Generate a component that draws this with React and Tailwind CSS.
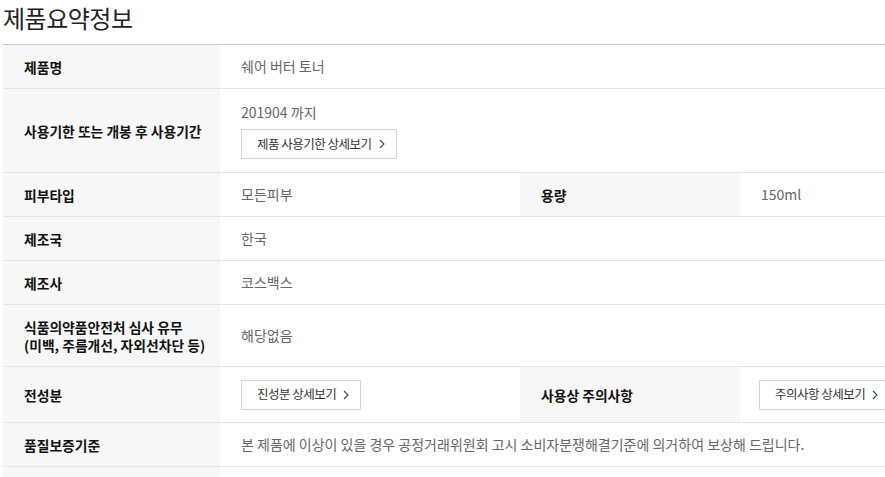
const Chevron = () => (
  <svg width="6" height="10" viewBox="0 0 6 10" className="ml-[7px] shrink-0">
    <polyline points="1,1 5,5 1,9" fill="none" stroke="#444" strokeWidth="1.1" />
  </svg>
);

function DetailButton({ children }) {
  return (
    <button className="h-[30px] flex items-center border border-[#d6d6d6] bg-white pl-[15px] pr-[11px] text-[12.5px] text-[#333] tracking-[-0.5px] whitespace-nowrap">
      {children}
      <Chevron />
    </button>
  );
}

const Th = ({ children, w = 'w-[217px]' }) => (
  <div className={`${w} shrink-0 bg-[#f7f7f7] flex items-center pl-[21px] text-[13.8px] font-bold text-[#111] leading-[18px]`}>
    {children}
  </div>
);

const Td = ({ children, w = 'flex-1' }) => (
  <div className={`${w} flex items-center pl-[21px] text-[14px] text-[#666]`}>{children}</div>
);

function Row({ h, children }) {
  return <div className={`${h} flex border-b border-[#e4e4e4]`}>{children}</div>;
}

export default function App() {
  return (
    <div className="w-[885px] h-[477px] overflow-hidden bg-white font-['Noto_Sans_CJK_KR','Noto_Sans',sans-serif]">
      <div className="h-[44px] flex items-start">
        <h2 className="pl-[3px] text-[24px] leading-[36px] font-normal text-[#222] tracking-[-0.5px]">
          제품요약정보
        </h2>
      </div>

      <div className="ml-[3px] w-[960px] border-t border-[#c8c8c8]">
        <Row h="h-[44px]">
          <Th>제품명</Th>
          <Td>쉐어 버터 토너</Td>
        </Row>

        <Row h="h-[84px]">
          <Th>사용기한 또는 개봉 후 사용기간</Th>
          <div className="flex-1 flex flex-col justify-center pl-[21px] text-[14px] text-[#666]">
            <p className="leading-[20px] mb-[7px]">201904 까지</p>
            <div>
              <DetailButton>제품 사용기한 상세보기</DetailButton>
            </div>
          </div>
        </Row>

        <Row h="h-[44px]">
          <Th>피부타입</Th>
          <Td w="w-[300px]">모든피부</Td>
          <Th w="w-[220px]">용량</Th>
          <Td>150ml</Td>
        </Row>

        <Row h="h-[44px]">
          <Th>제조국</Th>
          <Td>한국</Td>
        </Row>

        <Row h="h-[44px]">
          <Th>제조사</Th>
          <Td>코스백스</Td>
        </Row>

        <Row h="h-[62px]">
          <Th>
            식품의약품안전처 심사 유무
            <br />
            (미백, 주름개선, 자외선차단 등)
          </Th>
          <Td>해당없음</Td>
        </Row>

        <Row h="h-[56px]">
          <Th>전성분</Th>
          <Td w="w-[300px]">
            <DetailButton>진성분 상세보기</DetailButton>
          </Td>
          <Th w="w-[220px]">사용상 주의사항</Th>
          <div className="flex-1 flex items-center pl-[19px]">
            <DetailButton>주의사항 상세보기</DetailButton>
          </div>
        </Row>

        <Row h="h-[44px]">
          <Th>품질보증기준</Th>
          <Td>본 제품에 이상이 있을 경우 공정거래위원회 고시 소비자분쟁해결기준에 의거하여 보상해 드립니다.</Td>
        </Row>

        <Row h="h-[44px]">
          <Th>&nbsp;</Th>
          <Td>&nbsp;</Td>
        </Row>
      </div>
    </div>
  );
}
